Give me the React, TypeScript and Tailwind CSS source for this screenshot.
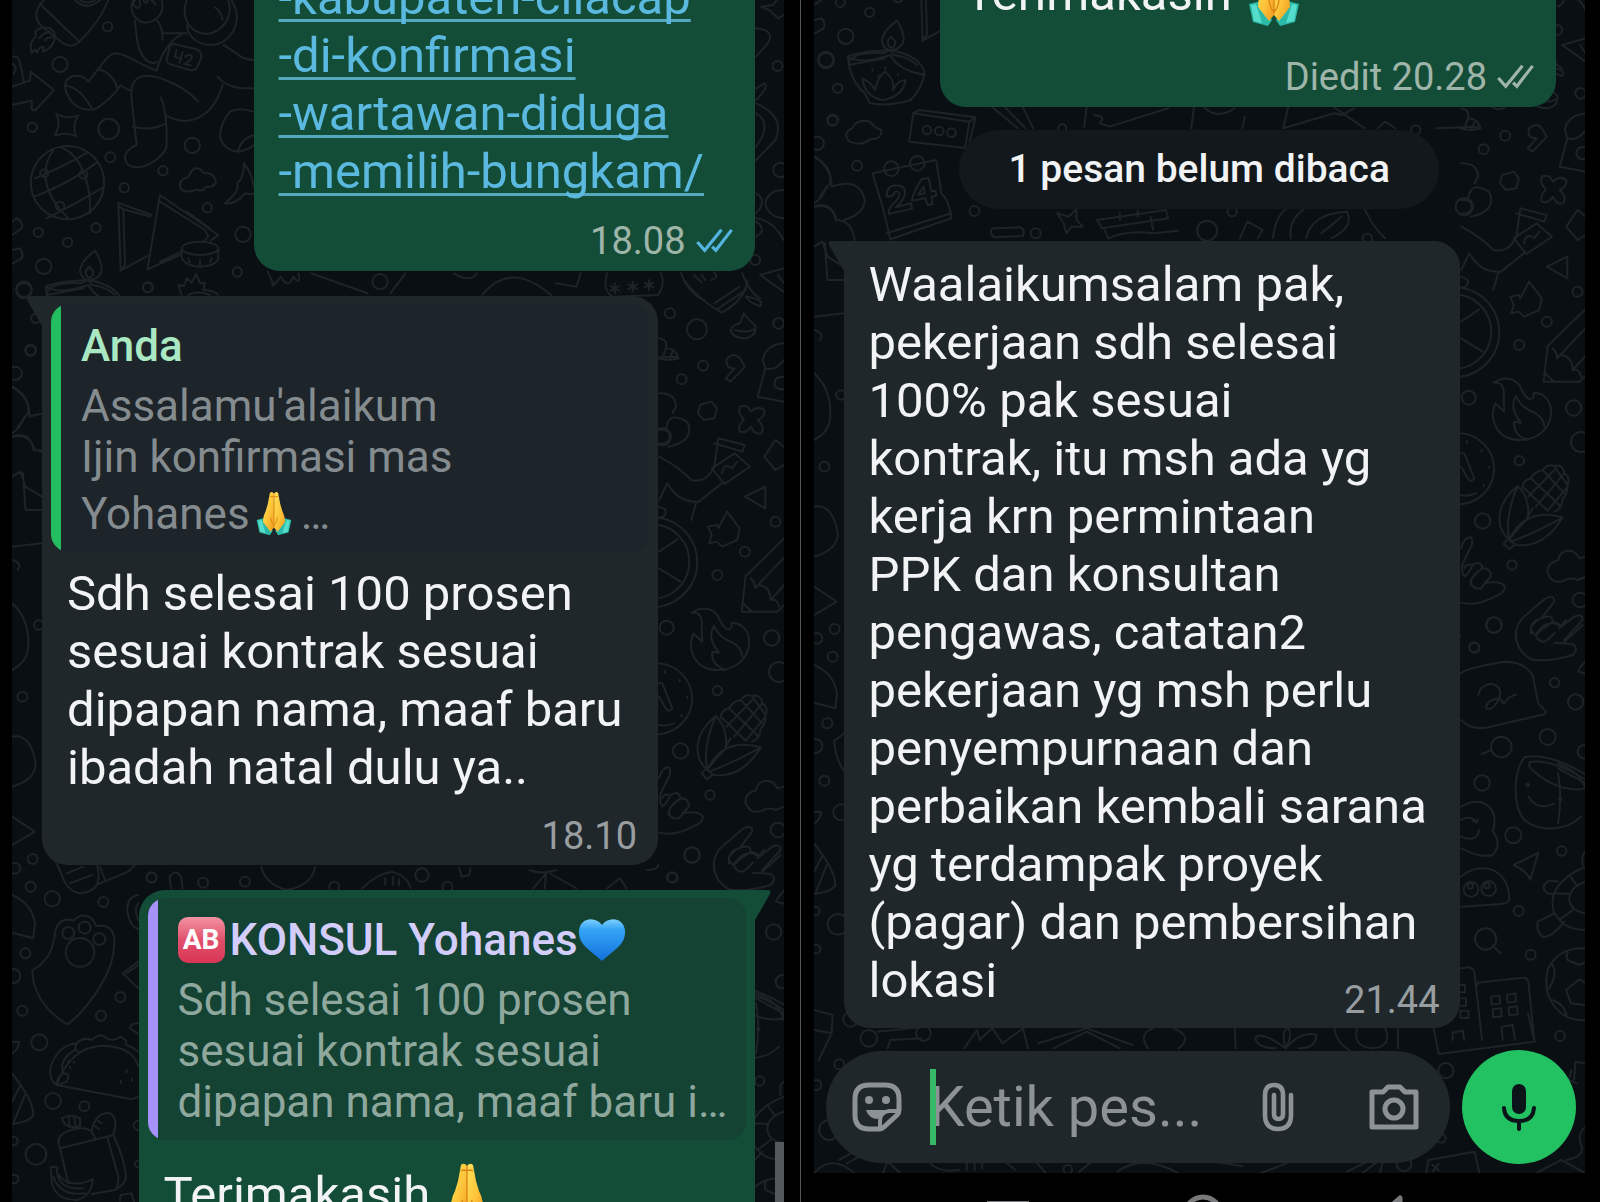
import type { ReactNode } from "react";

const FONT = "font-['Roboto',sans-serif]";

type Dot = [number, number, number];

function Strokes({ at, scale, paths, dots = [] }: { at: string; scale: string; paths: string[]; dots?: Dot[] }) {
  return (
    <g transform={`translate(${at}) scale(${scale})`}>
      {paths.map((d, i) => (
        <path key={i} d={d} vectorEffect="non-scaling-stroke" />
      ))}
      {dots.map(([x, y, r], i) => (
        <ellipse
          key={i}
          cx={x}
          cy={y}
          rx={scale.includes(" ") ? r * 0.65 : r}
          ry={r}
          vectorEffect="non-scaling-stroke"
        />
      ))}
    </g>
  );
}

/* Doodle wallpaper shared by both conversations. */
function Wallpaper({ shift = 0 }: { shift?: number }) {
  return (
    <svg aria-hidden="true" className="pointer-events-none absolute inset-0 h-full w-full">
      <g
        transform={`translate(0 ${-shift})`}
        fill="none"
        stroke="#1d2327"
        strokeWidth="2"
        strokeLinecap="round"
        strokeLinejoin="round"
      >
        {/* astronaut, rocket, globe, samosas */}
        <Strokes
          at="-12 0"
          scale="0.3333"
          paths={[
            "M132 0 C105 30 100 50 125 80 L190 130 Q215 145 235 128 C280 85 310 40 325 0 M120 12 L235 122",
            "M165 105 C160 80 125 75 105 95 Q112 108 100 118 C85 135 95 145 95 160 L105 148 L112 158 Q115 140 130 140 L130 155 Q165 140 165 105 M150 95 Q125 100 118 115 M160 112 Q140 110 135 122",
            "M225 0 Q260 35 300 0 M240 0 Q262 15 285 0",
            "M400 0 C385 30 405 65 435 68 C475 65 495 35 485 0 M405 0 q-12 18 8 24 q14 -8 4 -24 M430 0 q6 16 14 0 M455 0 l12 14",
            "M405 62 C410 110 410 180 460 190 L472 185 M472 62 Q490 85 487 120 M492 100 L560 100",
            "M560 0 C540 60 575 100 620 102 C670 95 700 50 685 0 M695 0 C735 70 690 130 635 135 C590 135 560 105 562 75 M645 22 Q665 38 668 60",
            "M545 104 C510 120 485 160 470 212 C420 195 380 160 345 160 C320 165 310 190 265 245 Q250 225 220 228 C185 240 190 270 215 305 C235 330 275 335 295 322 Q340 290 362 255 Q380 270 395 272",
            "M295 207 Q340 220 352 265 M195 257 Q240 260 275 325",
            "M595 305 C540 245 460 225 430 228 C400 235 390 260 395 300 L410 435 C375 450 365 475 385 495 C430 520 490 470 500 440 Q502 330 482 292 M398 380 Q450 395 498 370",
            "M500 348 C570 385 640 350 668 255 M652 230 C690 270 730 265 762 265 M670 135 C710 155 720 180 762 180",
            "M520 132 L590 148 Q608 158 603 175 L592 200 Q585 213 570 210 L508 192 Q495 185 502 170 L508 145 Q510 132 520 132Z M530 150 L525 170 L545 178 M548 155 L538 190 M556 170 Q575 158 576 172 Q570 185 552 192 L572 196",
            "M36 260 L90 242 L92 215 L162 270 L105 332 L95 328 L95 302 L36 314 M40 170 Q55 168 60 190 L72 245 M36 190 Q55 200 42 220",
            "M168 342 Q200 360 235 346 Q215 375 228 408 Q195 395 165 406 Q185 370 168 342Z",
            "M202 438 A110 110 0 1 0 203 438Z M182 442 C235 460 275 540 270 640 M160 450 C110 520 145 600 205 655 M105 535 Q190 500 262 458 M103 590 Q210 550 290 488 M140 655 Q210 620 310 562",
            "M355 608 L455 645 M355 608 L362 812 L442 768 M370 628 L450 650 M370 628 L375 795 M358 620 L372 630 M375 795 L365 808",
            "M480 585 L655 705 L632 722 M480 585 L442 808 L540 765 M480 605 L615 690 L625 710 L610 725 M545 755 L480 785 M560 635 L630 685",
            "M545 745 A55 20 0 0 1 655 745 A55 20 0 0 1 545 745 L545 775 Q560 800 600 800 Q650 798 655 775 L655 745 M565 775 l5 12 M600 780 v14 M635 775 l-4 12",
            "M545 570 Q530 545 555 535 Q565 535 570 520 Q590 490 612 520 Q640 515 648 545 Q640 565 620 560 Q605 578 590 568 Q565 580 545 570Z",
            "M762 335 Q715 320 690 335 Q660 370 660 410 Q670 450 715 455 Q745 450 762 435 M715 450 Q725 415 762 405",
            "M732 490 Q755 520 762 560 M732 490 Q732 535 712 550 Q720 575 675 610 Q705 615 735 580 Q755 585 762 580",
            "M285 752 Q240 785 240 815 Q250 845 270 840 Q305 835 305 805 Q303 780 285 752Z M268 800 Q250 815 262 830 Q278 840 280 815Z",
            "M140 880 Q150 845 245 850 L265 838 L275 855 Q320 860 345 885 M140 885 L250 865 M36 665 L50 655 Q70 665 65 685 L36 705 M36 750 L60 745 Q72 760 65 775 L36 792",
            "M545 885 L535 855 L552 858 L560 835 L575 848 L588 822 L600 850 L615 848 L610 870 Q640 870 655 885 M565 885 Q590 870 630 885",
          ]}
          dots={[
            [323, 80, 14], [180, 193, 23], [97, 382, 14], [326, 387, 31], [331, 472, 15], [577, 436, 23], [489, 512, 14],
            [373, 563, 14], [622, 623, 14], [288, 683, 14], [115, 697, 14], [203, 727, 14], [131, 799, 23], [729, 703, 23],
            [72, 872, 23], [443, 863, 14], [712, 816, 14], [133, 520, 12], [250, 524, 12], [180, 618, 13],
          ]}
        />
        {/* right edge and strip above the quoted reply */}
        <Strokes
          at="-12 0"
          scale="0.5102 0.3333"
          paths={[
            "M1492 20 L1515 15 L1525 -5 M1492 20 L1508 30 L1525 55 L1536 45 M1482 85 Q1520 90 1505 130 L1482 170",
            "M1482 265 L1498 250 Q1508 260 1482 300 M1482 310 Q1540 350 1520 420 L1482 480 M1482 340 Q1515 370 1482 440",
            "M1536 570 Q1505 570 1500 610 Q1505 650 1536 655 M1482 580 Q1505 600 1482 640 M1482 655 Q1515 660 1536 720 M1482 665 Q1505 690 1482 710",
            "M1490 825 L1536 805 M1490 825 L1536 875 M1525 825 L1536 850",
            "M525 815 L535 850 Q530 870 550 830 Q565 870 575 830 Q590 860 585 820 M610 820 L720 880 M765 880 L795 820 M890 820 Q920 850 935 820",
            "M945 885 Q1000 780 1080 885 M1090 850 L1130 860 L1138 820 M1190 820 Q1180 870 1200 890 L1290 885 Q1305 850 1295 820 M1335 820 Q1350 880 1380 900 M1360 825 l15 22 M1375 825 l8 16 M1395 840 Q1410 830 1400 818 M1455 820 Q1470 880 1490 895",
            "M1205 850 v30 M1197 858 l16 14 M1213 858 l-16 14 M1240 845 v30 M1232 853 l16 14 M1248 853 l-16 14 M1272 840 v30 M1264 848 l16 14 M1280 848 l-16 14",
          ]}
          dots={[[1524, 198, 15], [1530, 510, 22], [1480, 780, 15], [745, 845, 23]]}
        />
        <Strokes
          at="-12 280"
          scale="0.5102 0.3333"
          paths={[
            "M1340 0 Q1370 60 1415 98 Q1460 60 1465 0 M1400 70 L1450 20 M1408 85 L1462 30 M1465 50 Q1500 60 1490 78 Q1470 70 1462 50",
            "M1458 100 Q1470 125 1480 135 Q1485 165 1462 175 Q1435 175 1432 150 Q1435 135 1450 130 Z M1440 150 Q1465 160 1478 148",
            "M1292 175 Q1310 180 1305 205 Q1325 205 1330 235 Q1310 245 1290 235 M1305 205 L1298 238 M1318 215 L1312 240",
            "M1425 235 Q1440 215 1450 235 L1460 260 L1432 305 L1422 295 L1440 265 Q1420 265 1425 235Z M1536 190 Q1500 195 1495 240 L1500 265 Q1520 275 1536 240 M1500 265 L1485 350 L1536 365 M1536 290 q-20 0 -18 25 q5 15 18 12",
            "M1372 375 L1395 365 L1405 385 L1400 415 L1380 420 L1368 400Z",
            "M1450 380 Q1465 370 1472 395 Q1485 375 1498 390 Q1500 410 1485 420 Q1500 440 1492 460 Q1478 465 1472 440 Q1462 462 1450 455 Q1445 440 1458 418 Q1445 400 1450 380Z",
            "M1292 340 Q1325 340 1325 380 L1318 400 M1305 450 Q1310 400 1330 415 Q1355 420 1350 460 Q1345 490 1310 500 M1292 450 Q1315 445 1312 480 Q1300 495 1292 490",
            "M1292 530 Q1330 560 1355 600 Q1385 610 1400 560 L1408 475 L1460 495 L1455 515 L1400 490 M1395 565 L1440 520 L1470 560 L1420 612 L1395 565 M1415 580 Q1420 545 1435 565 L1445 545 M1536 500 L1520 480 L1498 530 L1520 570 L1536 555",
            "M1292 660 L1308 610 Q1330 670 1370 665 L1415 610 M1365 665 L1355 720",
            "M1460 650 L1500 620 L1500 685 Z M1425 695 L1450 745 L1445 780 L1415 800 L1405 785 L1390 790 L1395 765 L1388 740 L1405 735 L1408 745Z",
          ]}
          dots={[[1313, 100, 15], [1366, 148, 30], [1526, 130, 16], [1378, 257, 15], [1336, 298, 15], [1520, 725, 15], [1460, 815, 15], [290, 22, 15], [47, 28, 23], [60, 212, 15], [70, 115, 14], [30, 280, 20]]}
        />
        {/* left edge beside the quoted reply */}
        <Strokes
          at="-12 280"
          scale="0.5102 0.3333"
          paths={[
            "M24 320 Q60 350 55 400 L35 440 M24 470 Q60 460 68 510 M24 590 L40 575 L50 620 L82 650 M45 580 L50 690 L82 690 M24 800 L82 790 M24 840 Q45 850 35 870",
            "M24 970 Q60 1020 55 1110 Q50 1150 24 1170 M24 1370 Q60 1360 70 1450 Q70 1500 24 1520 M24 1610 L68 1655 L24 1695",
          ]}
          dots={[[44, 1250, 15], [76, 1035, 14], [64, 1737, 15]]}
        />
        {/* orange slice, flame, clock, corn, hands */}
        <Strokes
          at="587 470"
          scale="0.3333"
          paths={[
            "M180 143 A135 135 0 0 1 180 410 M180 165 A112 112 0 0 1 180 385 M180 245 L235 208 M180 295 L245 335 M178 110 Q205 115 200 130 Q195 145 180 142",
            "M278 428 Q315 425 308 480 L310 515 L283 490 C262 540 290 600 355 600 C420 600 455 555 450 505 C445 475 420 455 397 460 Q402 478 385 478 Q370 470 355 435 Q325 400 278 428Z M345 468 C325 500 345 530 360 548 L340 545 Q335 585 380 600 M345 468 Q360 505 405 520 Q430 540 430 560",
            "M180 580 A110 107 0 0 1 180 793 M180 640 L190 640 L220 715 Q210 730 200 715 L180 680 M180 765 Q205 770 225 760 M198 603 v6 M242 630 v4 M265 680 v4 M248 735 v4",
            "M325 900 C280 860 285 790 350 738 C385 770 385 820 378 838 Q345 870 325 900Z M325 900 Q310 830 350 738 M325 900 Q370 800 485 832 Q430 925 345 915Z M330 905 Q400 880 485 832 M322 895 L308 912 L325 928 L342 912",
            "M365 745 Q365 720 390 715 Q400 695 425 690 Q440 670 460 678 Q485 672 490 700 Q508 710 500 735 Q500 765 485 775 Q485 805 460 815 M370 745 L440 812 M390 715 L475 795 M425 690 L490 760 M460 680 L500 735 M490 700 L405 800 M460 690 L382 770 M500 740 L440 812 M380 830 L395 805",
            "M180 925 Q190 890 210 892 Q220 905 205 930 L190 960 Q175 990 190 1010 Q205 1000 215 975 Q195 970 190 985 M215 975 Q240 960 245 985 Q205 1010 210 1035 M245 985 Q270 985 270 1010 L240 1045 Q215 1050 208 1025 M270 1010 L250 1030 Q300 1020 312 1040 Q310 1060 285 1068 Q230 1100 180 1088",
            "M556 950 L535 955 Q520 925 490 935 Q475 940 472 960 Q435 970 440 1000 Q455 1035 490 1022 Q505 1010 530 1020 L556 1010",
            "M556 205 L440 318 L428 425 L535 425 L556 405 M556 262 L468 355 Q470 340 455 325 M480 345 Q515 350 515 390 L556 345 M515 390 Q535 385 540 410 M430 398 L460 425",
            "M345 1200 Q340 1150 375 1125 L430 1078 Q460 1060 460 1085 L425 1130 M390 1180 Q385 1145 420 1135 Q455 1120 455 1145 Q485 1150 475 1165 L520 1130 Q545 1120 545 1140 L490 1200 M455 1145 L420 1170 Q400 1195 395 1175",
          ]}
          dots={[[203, 473, 21], [355, 315, 15], [355, 662, 14], [245, 843, 23], [333, 975, 14], [518, 504, 23], [540, 606, 30], [279, 1155, 23], [537, 1080, 22]]}
        />
        {/* speech bubble, mug, turtle, football */}
        <Strokes
          at="587 850"
          scale="0.3333"
          paths={[
            "M345 30 Q340 90 390 118 Q440 128 515 105 Q535 85 515 72 L460 68 M490 65 L545 15 M390 20 L410 0 M410 55 Q425 75 445 55 L462 38 M410 55 Q395 45 430 15 M430 15 L455 8 L480 18 L495 0",
            "M180 160 Q190 145 310 125 Q370 125 395 165 L412 250 L435 275 L430 283 L255 323 Q210 330 180 300 M232 225 Q240 190 275 192 Q305 200 295 235 Q275 275 255 265 Q255 240 295 235 L308 250 L325 232 L345 223",
            "M242 402 L272 390 M370 412 C335 460 335 560 370 600 C420 640 500 630 540 590 M370 412 Q440 395 556 465 M385 428 Q440 410 556 480 L556 505 C490 520 420 480 385 440Z M383 530 Q410 575 460 550",
            "M180 560 Q230 530 265 560 Q290 590 275 635 Q305 670 275 705 Q240 715 180 685 M180 600 Q210 585 225 605 M180 650 Q225 670 235 630 M215 602 l12 6 l4 -10",
            "M338 735 L412 698 L388 780 Q380 755 338 735Z M180 770 Q220 735 270 748 Q325 770 325 840 Q320 850 300 852 L180 860 M275 977 L298 1000",
            "M556 740 Q500 760 470 800 Q445 840 460 880 L485 910 Q510 930 556 930 M556 785 Q505 800 505 840 Q510 875 556 880 M470 785 Q435 775 428 800 Q430 825 460 822 M505 765 L528 797 M460 820 L505 822 M475 900 L515 870 M460 880 L410 905 Q405 935 425 950 Q450 955 490 905 M556 695 Q540 700 545 735",
            "M556 985 Q470 980 440 1050 Q425 1120 465 1165 Q500 1205 556 1200 M500 995 Q495 1015 500 1020 L535 1035 L556 1025 M455 1035 Q470 1060 445 1105 M452 1140 Q490 1150 497 1190 M495 1110 L535 1078 L556 1090 M495 1110 L510 1150 L550 1155",
            "M180 1045 L205 1042 Q215 1045 220 1055 L243 1260 M228 1095 Q230 1088 240 1087 L368 1073 Q380 1075 382 1085 L400 1260 M180 1095 h12 v22 h-12 M180 1135 h15 v22 h-15 M178 1172 h24 v22 h-24Z M270 1130 l25 -3 l2 24 l-25 3Z M318 1124 l25 -3 l2 24 l-25 3Z M275 1168 l25 -3 l2 24 l-25 3Z M323 1162 l25 -3 l2 24 l-25 3Z M305 1260 L302 1220 L335 1215 L342 1260 M155 1260 V1238 L185 1232 L190 1260",
            "M556 120 Q530 150 532 155 L556 162",
          ]}
          dots={[[279, 15, 23], [221, 83, 15], [461, 188, 14], [524, 246, 23], [440, 351, 24], [301, 381, 31], [243, 489, 23], [337, 646, 24], [482, 693, 14], [353, 873, 15], [389, 1004, 15], [254, 957, 32], [210, 808, 22], [263, 806, 22], [550, 395, 20], [380, 495, 4], [478, 538, 4], [208, 798, 8], [258, 797, 8], [477, 1248, 15]]}
        />
        {/* paw, taco, backpack */}
        <Strokes
          at="-12 860"
          scale="0.3333"
          paths={[
            "M165 0 L182 35 Q200 95 240 100 Q290 95 295 60 Q300 20 280 0 M165 0 L180 35 M200 40 L250 20 M210 70 L275 45 M300 20 L315 60 M295 72 L385 35 L405 15",
            "M36 105 Q95 130 105 190 L100 235 L36 218",
            "M97 332 C165 290 160 240 168 205 Q185 170 220 182 Q245 155 275 175 L290 198 Q340 190 343 240 Q345 310 300 380 Q250 460 202 493 Q100 430 97 332Z",
            "M415 105 Q380 110 382 155 Q390 200 415 208 M415 130 Q400 150 415 180 M415 305 L368 340 L415 385 M380 340 L415 315 M36 640 Q100 720 100 765 Q90 785 36 792 M60 680 L36 725 M75 705 L42 785 M36 545 L58 545 Q55 570 36 580 M415 490 Q390 490 390 505 L415 522",
            "M170 675 Q210 560 310 557 Q400 560 415 620 M170 675 Q145 660 152 620 Q175 555 230 550 Q250 530 275 540 Q300 515 320 535 Q345 545 360 530 Q385 540 378 555 M170 675 L395 718 L415 710 M230 550 Q220 570 235 575 M190 640 Q175 600 225 570 M170 670 Q175 640 200 640 Q210 650 200 665 L175 675 M378 555 Q400 562 415 575 M205 602 v6 M210 620 v4 M222 605 v3 M380 631 v6 M363 662 v6 M396 657 v5",
            "M180 865 Q165 830 200 815 Q250 795 275 815 L285 835 M180 865 L340 825 Q375 900 378 950 Q375 975 345 990 L275 1002 M180 865 L205 970 M322 832 L355 950 Q355 980 345 990 M340 825 Q358 770 325 758 Q285 760 275 812 M185 775 Q195 810 240 798 L240 775 Q215 760 185 775Z M205 770 l5 32 M222 768 l5 32 M290 780 l15 10 M285 798 l12 10",
            "M152 920 L170 922 L172 940 Q205 990 278 958 Q275 1010 230 1020 Q165 1020 155 965Z M172 940 Q180 990 250 985 M160 950 Q180 1010 255 1000 M360 1022 L362 1005 L395 1000 L402 1025",
          ]}
          dots={[[45, 25, 16], [92, 80, 15], [157, 116, 23], [310, 126, 15], [455, 53, 15], [76, 280, 15], [361, 411, 15], [67, 452, 15], [303, 467, 15], [118, 547, 24], [159, 723, 24], [253, 739, 15], [108, 883, 31], [205, 219, 18], [254, 203, 18], [298, 237, 18], [240, 277, 43], [40, 348, 21], [40, 843, 13], [42, 957, 13], [415, 796, 14], [415, 912, 10]]}
        />
        {/* strip between the reply and the next message, and right edge */}
        <Strokes
          at="-12 870"
          scale="0.5102 0.3333"
          paths={[
            "M335 55 L332 20 Q345 -5 355 20 L358 55 M512 -10 Q520 40 560 60 Q610 50 618 -10 M710 55 Q740 10 768 5 Q800 20 805 55 M755 25 v20 M770 22 v22 M782 28 v18 M900 -5 L905 20 L920 15 L922 -5",
            "M1038 0 Q1060 15 1090 0 M1045 55 L1070 10 M1070 10 L1068 55 M1080 12 L1130 55 M1190 55 L1215 25 L1228 55 M1268 0 Q1290 0 1290 -15",
            "M1482 370 Q1530 400 1536 450 M1482 385 L1536 430 M1482 400 Q1490 470 1482 550",
          ]}
          dots={[[297, 22, 15], [398, 38, 15], [480, 35, 15], [655, 50, 15], [877, 50, 15], [827, 15, 20], [1317, 22, 15]]}
        />
        {/* strip around the unread marker */}
        <Strokes
          at="-13 230"
          scale="0.5102 0.3333"
          paths={[
            "M92 170 Q95 240 125 280 L135 310 Q175 320 215 300 Q240 260 242 215 Q230 165 175 150 Q110 155 92 170 Q120 195 175 165 Q190 210 242 225 M120 235 Q140 250 145 270 Q150 230 165 215 Q185 240 180 270 Q190 240 205 240 Q200 290 160 300 Q125 290 120 235 M140 208 v4 M165 202 v4 M190 222 v4 M152 228 v3",
            "M220 340 L232 330 L342 352 L328 445 L212 425 Z M220 340 L330 365 L342 352 M330 365 L322 440",
            "M95 425 Q80 400 100 385 Q110 355 135 365 Q145 385 158 390 Q158 420 135 418 Q120 440 95 425Z",
            "M140 520 L265 480 L275 580 Q290 600 295 655 L175 718 L160 620 L140 520 M168 700 L295 640",
            "M168 590 Q166 560 185 556 Q205 556 204 580 Q202 600 186 622 L216 610 L218 626 L172 642 Q170 626 182 610 Q196 590 192 578 Q184 568 180 588Z",
            "M236 538 L250 534 L256 574 L264 572 L265 588 L256 590 L258 612 L248 616 L244 594 L218 602 Q216 590 236 538Z M240 560 L230 584 L243 580Z",
            "M375 685 L430 682 Q440 690 435 708 L378 712 Q368 700 375 685Z M502 640 L525 650 L540 628 L540 660 L552 680 L530 680 L520 700 L515 670Z",
            "M25 470 Q60 500 60 560 Q115 530 125 600 Q125 640 85 660 M25 620 Q60 600 68 660 Q100 660 105 720 M50 560 Q40 600 25 610",
            "M375 322 L425 385 M400 322 L440 385 M435 322 L455 385 M560 322 L555 380 M575 345 Q600 350 585 370 L605 380 L720 325 M770 322 L765 385 M790 322 Q815 360 850 325 M870 350 L865 385 M955 322 L945 385 L1045 340 L1060 345 L1085 325 M1045 322 L1105 385 M1130 385 L1145 365 L1165 385",
            "M580 660 L715 630 L720 655 L590 685Z M595 690 L602 715 Q640 690 690 700 L740 692 M625 640 v20 M660 632 v20 M690 690 L685 650 M860 715 L875 665 L905 690 L895 715 M925 715 Q930 650 950 628 M960 715 Q955 660 985 628 M990 715 Q1000 640 1070 635 Q1085 680 1040 715 M1020 700 L1060 650 M1105 628 Q1120 680 1145 715",
            "M1245 385 L1330 380",
          ]}
          dots={[[62, 360, 16], [110, 497, 15], [247, 390, 13], [271, 393, 13], [295, 398, 13], [340, 633, 15], [460, 700, 15], [796, 692, 30], [845, 635, 14], [177, 506, 22], [228, 490, 22], [1300, 620, 26], [1205, 390, 14], [1110, 715, 14], [512, 385, 12]]}
        />
        {/* strip around the composer */}
        <Strokes
          at="-13 1230"
          scale="0.5102 0.3333"
          paths={[
            "M25 30 L62 45 L60 100 L35 180 M25 90 L60 100 M150 95 L245 80 M170 145 L175 120 L235 115 M320 145 L345 90 L350 120 L375 85 L395 130 L435 85 L445 145 M465 130 L560 85 L650 135 M495 145 L560 95 L625 145 M680 145 Q660 100 690 85 M730 85 Q770 110 740 145 M850 80 L852 145",
            "M950 145 Q965 100 955 85 Q940 90 950 145 Q900 90 890 115 Q895 145 930 145 M950 145 Q980 90 1010 105 Q1010 145 975 145 M1045 85 Q1050 130 1075 150 M1090 85 Q1080 140 1120 145 Q1160 140 1145 85 M1170 85 V145",
            "M1240 85 L1250 162 L1438 125 L1425 40",
            "M25 520 Q60 460 105 520 M75 480 L110 450 M90 490 L120 465 M160 520 L170 485 L195 520 M250 485 Q270 520 310 510 M325 490 v20 M340 490 v20 M355 490 v15 M400 485 L420 510 M480 520 L460 485 M545 515 L570 485 M620 515 Q670 460 740 520 M810 485 L865 498 M960 485 L900 520 M1070 515 L1110 485 M1100 520 L1130 485 M1135 520 L1140 485",
            "M1225 520 L1230 480 L1320 455 L1330 520 M1238 495 l12 16 M1250 492 l-12 22 M1515 240 L1518 185 L1535 190 M1510 210 L1505 240 L1520 250 M1538 380 Q1520 400 1530 440 Q1535 470 1500 480 M1440 520 L1490 480 L1538 520",
          ]}
          dots={[[97, 58, 22], [133, 115, 25], [240, 100, 22], [75, 193, 15], [30, 255, 15], [55, 390, 30], [1264, 212, 23], [1182, 492, 22], [523, 508, 13], [1255, 415, 13]]}
        />
      </g>
    </svg>
  );
}

function FoldedHands({ className }: { className: string }) {
  return (
    <svg viewBox="0 0 52 64" role="img" aria-label="🙏" className={className}>
      <defs>
        <linearGradient id="skin" x1="0" x2="1" y1="0" y2="1">
          <stop offset="0" stopColor="#ffe25a" />
          <stop offset="0.55" stopColor="#fdc43a" />
          <stop offset="1" stopColor="#f29a1c" />
        </linearGradient>
      </defs>
      <path d="M1 42 L13 39 L24 58 L20 64 L5 60Z" fill="#2bb9a8" />
      <path d="M51 42 L39 39 L28 58 L32 64 L47 60Z" fill="#2bb9a8" />
      <path d="M3 43 L8 42 L14 61 L6 59Z M49 43 L44 42 L38 61 L46 59Z" fill="#55dccb" />
      <path d="M20 3 Q23 0 26 4 L26 53 L21 59 L10 45 Q10 36 14 29 L17 19Z" fill="url(#skin)" />
      <path d="M32 3 Q29 0 26 4 L26 53 L31 59 L42 45 Q42 36 38 29 L35 19Z" fill="url(#skin)" />
      <path d="M26 4 V52 M20 9 Q23 7 26 9 Q29 7 32 9 M21 38 Q22 46 26 50 M31 38 Q30 46 26 50" fill="none" stroke="#d98516" strokeWidth="1.3" />
    </svg>
  );
}

function BlueHeart() {
  return (
    <svg viewBox="0 0 48 44" role="img" aria-label="💙" className="h-[44px] w-[48px] shrink-0">
      <defs>
        <linearGradient id="heart" x1="0" x2="0" y1="0" y2="1">
          <stop offset="0" stopColor="#7ed0ff" />
          <stop offset="0.25" stopColor="#35a4f5" />
          <stop offset="1" stopColor="#1272dd" />
        </linearGradient>
      </defs>
      <path d="M24 7 C18 -2 2 -1 1 13 C0 27 14 33 24 43 C34 33 48 27 47 13 C46 -1 30 -2 24 7Z" fill="url(#heart)" />
    </svg>
  );
}

function Ticks({ className }: { className: string }) {
  return (
    <svg viewBox="0 0 40 28" fill="none" stroke="currentColor" strokeWidth="3.4" aria-hidden="true" className={className}>
      <path d="M2 15 L10 24 L28 2 M18 20 L22 24 L39 2" />
    </svg>
  );
}

function Tail({ side }: { side: "left" | "right" }) {
  return side === "left" ? (
    <svg viewBox="0 0 20 30" aria-hidden="true" className="absolute top-0 -left-[16px] h-[30px] w-[20px] text-[#20272b]">
      <path d="M3 0 H20 V30 H16 L1 4 Q0 0 3 0Z" fill="currentColor" />
    </svg>
  ) : (
    <svg viewBox="0 0 20 30" aria-hidden="true" className="absolute top-0 -right-[16px] h-[30px] w-[20px] text-[#144d37]">
      <path d="M17 0 H0 V30 H4 L19 4 Q20 0 17 0Z" fill="currentColor" />
    </svg>
  );
}

function Quote({ bar, tone, title, children }: { bar: string; tone: string; title: ReactNode; children: ReactNode }) {
  return (
    <blockquote className={`relative flex overflow-hidden rounded-[18px] ${tone}`}>
      <span className={`w-[10px] shrink-0 ${bar}`} />
      <div className="min-w-0 pt-4 pb-3 pl-5">
        {title}
        <div className="mt-[9px] text-[44px] leading-[51px] whitespace-nowrap">{children}</div>
      </div>
    </blockquote>
  );
}

const BODY = "text-[49px] leading-[58px] text-[#f1f3f5] whitespace-nowrap";
const META = "text-[38px] leading-[44px]";

function LeftChat() {
  const link = ["-kabupaten-cilacap", "-di-konfirmasi", "-wartawan-diduga", "-memilih-bungkam/"];
  return (
    <section className="relative ml-3 mr-4 min-w-0 flex-1 overflow-hidden bg-[#0a0f13]">
      <Wallpaper />
      <div className="relative flex flex-col gap-[25px] pr-[29px] pl-[30px]">
        <article className="-mt-[31px] w-[501px] self-end rounded-b-[26px] bg-[#144d37] pb-2 pl-[25px]">
          <a
            href="#berita"
            className="block text-[49px] leading-[58px] text-[#5bb9e0] underline decoration-[#55a9bd] decoration-[3px] underline-offset-[5px] [text-decoration-skip-ink:none]"
          >
            {link.map((part) => (
              <span key={part} className="block">
                {part}
              </span>
            ))}
          </a>
          <p className={`mt-[18px] flex items-center justify-end gap-2 pr-[21px] text-[#9fb5aa] ${META}`}>
            18.08 <Ticks className="h-[26px] w-[40px] text-[#53b5df]" />
          </p>
        </article>

        <article className="relative w-[616px] self-start rounded-[26px] rounded-tl-none bg-[#20272b] px-[9px] pt-2 pb-[7px]">
          <Tail side="left" />
          <Quote
            bar="bg-[#24bd5f]"
            tone="bg-[#1d242a] text-[#858c90]"
            title={<h2 className="text-[44px] leading-[52px] font-medium text-[#a9e8c3]">Anda</h2>}
          >
            <p>Assalamu'alaikum</p>
            <p>Ijin konfirmasi mas</p>
            <p className="flex items-center pt-[6px]">
              Yohanes
              <FoldedHands className="mr-[9px] mb-1 ml-[6px] h-[46px] w-[36px]" />…
            </p>
          </Quote>
          <p className={`mt-[13px] px-4 ${BODY}`}>
            Sdh selesai 100 prosen
            <br />
            sesuai kontrak sesuai
            <br />
            dipapan nama, maaf baru
            <br />
            ibadah natal dulu ya..
          </p>
          <p className={`mt-[17px] pr-3 text-right text-[#989da0] ${META}`}>18.10</p>
        </article>

        <article className="relative w-[616px] self-end rounded-tl-[26px] bg-[#144d37] px-[9px] pt-2">
          <Tail side="right" />
          <Quote
            bar="bg-[#a791fb]"
            tone="bg-[#144233] text-[#8fa89e]"
            title={
              <h2 className="flex items-center text-[44px] leading-[52px] font-medium whitespace-nowrap text-[#d3cdfb]">
                <span className="mr-[5px] flex h-[46px] w-[47px] items-center justify-center rounded-[10px] bg-linear-to-b from-[#f292a5] via-[#e0506b] to-[#d93455] text-[28px] font-bold text-white">
                  AB
                </span>
                KONSUL Yohanes
                <BlueHeart />
              </h2>
            }
          >
            <p>Sdh selesai 100 prosen</p>
            <p>sesuai kontrak sesuai</p>
            <p>dipapan nama, maaf baru i…</p>
          </Quote>
          <p className={`mt-[26px] flex gap-[11px] px-4 ${BODY}`}>
            Terimakasih <FoldedHands className="-mt-1 h-[64px] w-[52px]" />
          </p>
        </article>
      </div>
      <span className="absolute right-0 bottom-0 h-[60px] w-[9px] bg-[#54595d]" />
    </section>
  );
}

const REPLY = [
  "Waalaikumsalam pak,",
  "pekerjaan sdh selesai",
  "100% pak sesuai",
  "kontrak, itu msh ada yg",
  "kerja krn permintaan",
  "PPK dan konsultan",
  "pengawas, catatan2",
  "pekerjaan yg msh perlu",
  "penyempurnaan dan",
  "perbaikan kembali sarana",
  "yg terdampak proyek",
  "(pagar) dan pembersihan",
  "lokasi",
];

function Composer() {
  return (
    <form className="mt-[22px] flex items-center gap-3 pr-[9px] pb-[9px] pl-3" onSubmit={(e) => e.preventDefault()}>
      <div className="flex h-[112px] min-w-0 flex-1 items-center rounded-full bg-[#20272b] pr-[31px] pl-[26px] text-[#8c9296]">
        <button type="button" aria-label="Stiker" className="shrink-0">
          <svg viewBox="0 0 50 50" className="size-[50px]" fill="none" stroke="currentColor" strokeWidth="5" strokeLinejoin="round">
            <path d="M17 3 H33 Q47 3 47 17 V28 Q47 31 45 33 L32 45 Q30 47 27 47 H17 Q3 47 3 33 V17 Q3 3 17 3Z" />
            <path d="M28 46 V39 Q28 30 37 29 H46" strokeWidth="4" />
            <path d="M14 28 H33 L28 33 L26 37 Q17 37 14 28Z" fill="currentColor" stroke="none" />
            <circle cx="17" cy="18" r="4" fill="currentColor" stroke="none" />
            <circle cx="34" cy="18" r="4" fill="currentColor" stroke="none" />
          </svg>
        </button>
        <div className="relative ml-7 min-w-0 flex-1">
          <input
            aria-label="Ketik pesan"
            placeholder="Ketik pes..."
            className="block h-[76px] w-full bg-transparent text-[56px] leading-[76px] outline-none placeholder:text-[#8c9296]"
          />
          <span className="absolute top-0 left-0 h-[76px] w-[6px] bg-[#35b968]" />
        </div>
        <button type="button" aria-label="Lampirkan" className="mr-[75px] shrink-0">
          <svg viewBox="0 0 32 50" className="h-[50px] w-[32px]" fill="none" stroke="currentColor" strokeWidth="4.6" strokeLinecap="round">
            <path d="M29 13 V33 Q29 47 16 47 Q3 47 3 33 V13 Q3 3 12 3 Q21 3 21 13 V32 Q21 37 16.500 37 Q12 37 12 32 V13" />
          </svg>
        </button>
        <button type="button" aria-label="Kamera" className="shrink-0">
          <svg viewBox="0 0 50 46" className="h-[46px] w-[50px]" fill="none" stroke="currentColor" strokeWidth="5" strokeLinejoin="round">
            <path d="M3 8 H14 L19 3 H31 L36 8 H47 V43 H3Z" />
            <circle cx="25" cy="25" r="9" />
          </svg>
        </button>
      </div>
      <button type="button" aria-label="Pesan suara" className="flex size-[114px] shrink-0 items-center justify-center rounded-full bg-[#22c162] text-[#0b1418]">
        <svg viewBox="0 0 36 48" className="h-[48px] w-[36px]" fill="none" stroke="currentColor" strokeWidth="4" strokeLinecap="round">
          <rect x="11" y="1" width="14" height="30" rx="7" fill="currentColor" stroke="none" />
          <path d="M3 25 Q4 38 18 38 Q32 38 33 25 M18 38 V46" />
        </svg>
      </button>
    </form>
  );
}

function RightChat() {
  return (
    <section className="mr-[15px] ml-[13px] flex min-w-0 flex-1 flex-col">
      <div className="relative shrink-0 overflow-hidden bg-[#0a0f13]">
        <Wallpaper shift={230} />
        <div className="relative flex flex-col">
          <article className="-mt-[35px] mr-[29px] w-[616px] self-end rounded-b-[26px] bg-[#144d37] pb-2 pl-[25px]">
            <p className={`flex gap-4 ${BODY}`}>
              Terimakasih <FoldedHands className="-mt-[3px] h-[64px] w-[52px]" />
            </p>
            <p className={`mt-[29px] flex items-center justify-end gap-2 pr-[21px] text-[#9fb5aa] ${META}`}>
              Diedit 20.28 <Ticks className="h-[26px] w-[40px]" />
            </p>
          </article>
          <p className="mt-[23px] flex h-[79px] w-[480px] items-center justify-center self-center rounded-full bg-[#12181c] text-[39px] font-medium text-[#f1f3f5]">
            1 pesan belum dibaca
          </p>
          <article className="relative mt-8 ml-[30px] w-[616px] rounded-[26px] rounded-tl-none bg-[#20272b] px-[25px] pt-[15px] pb-[18px]">
            <Tail side="left" />
            <p className={BODY}>
              {REPLY.map((line) => (
                <span key={line} className="block">
                  {line}
                </span>
              ))}
            </p>
            <span className={`absolute right-[20px] bottom-[6px] text-[#989da0] ${META}`}>21.44</span>
          </article>
          <Composer />
        </div>
      </div>
      <nav aria-label="Navigasi sistem" className="mt-[21px] flex shrink-0 justify-between pr-[165px] pl-[173px] text-[#77797b]">
        <button type="button" aria-label="Aplikasi terbaru">
          <svg viewBox="0 0 42 42" className="size-[42px]" fill="none" stroke="currentColor" strokeWidth="4">
            <rect x="2" y="9" width="38" height="31" />
          </svg>
        </button>
        <button type="button" aria-label="Beranda">
          <svg viewBox="0 0 42 42" className="size-[42px]" fill="none" stroke="currentColor" strokeWidth="5">
            <circle cx="21" cy="21" r="18" />
          </svg>
        </button>
        <button type="button" aria-label="Kembali">
          <svg viewBox="0 0 42 42" className="size-[42px]" fill="none" stroke="currentColor" strokeWidth="5" strokeLinejoin="round">
            <path d="M22 4 V38 L3 21Z" />
          </svg>
        </button>
      </nav>
    </section>
  );
}

export default function App() {
  return (
    <main className={`flex h-screen overflow-hidden bg-black ${FONT}`}>
      <div className="flex min-w-0 flex-1 border-r border-[#55585a]">
        <LeftChat />
      </div>
      <div className="flex min-w-0 flex-1">
        <RightChat />
      </div>
    </main>
  );
}
